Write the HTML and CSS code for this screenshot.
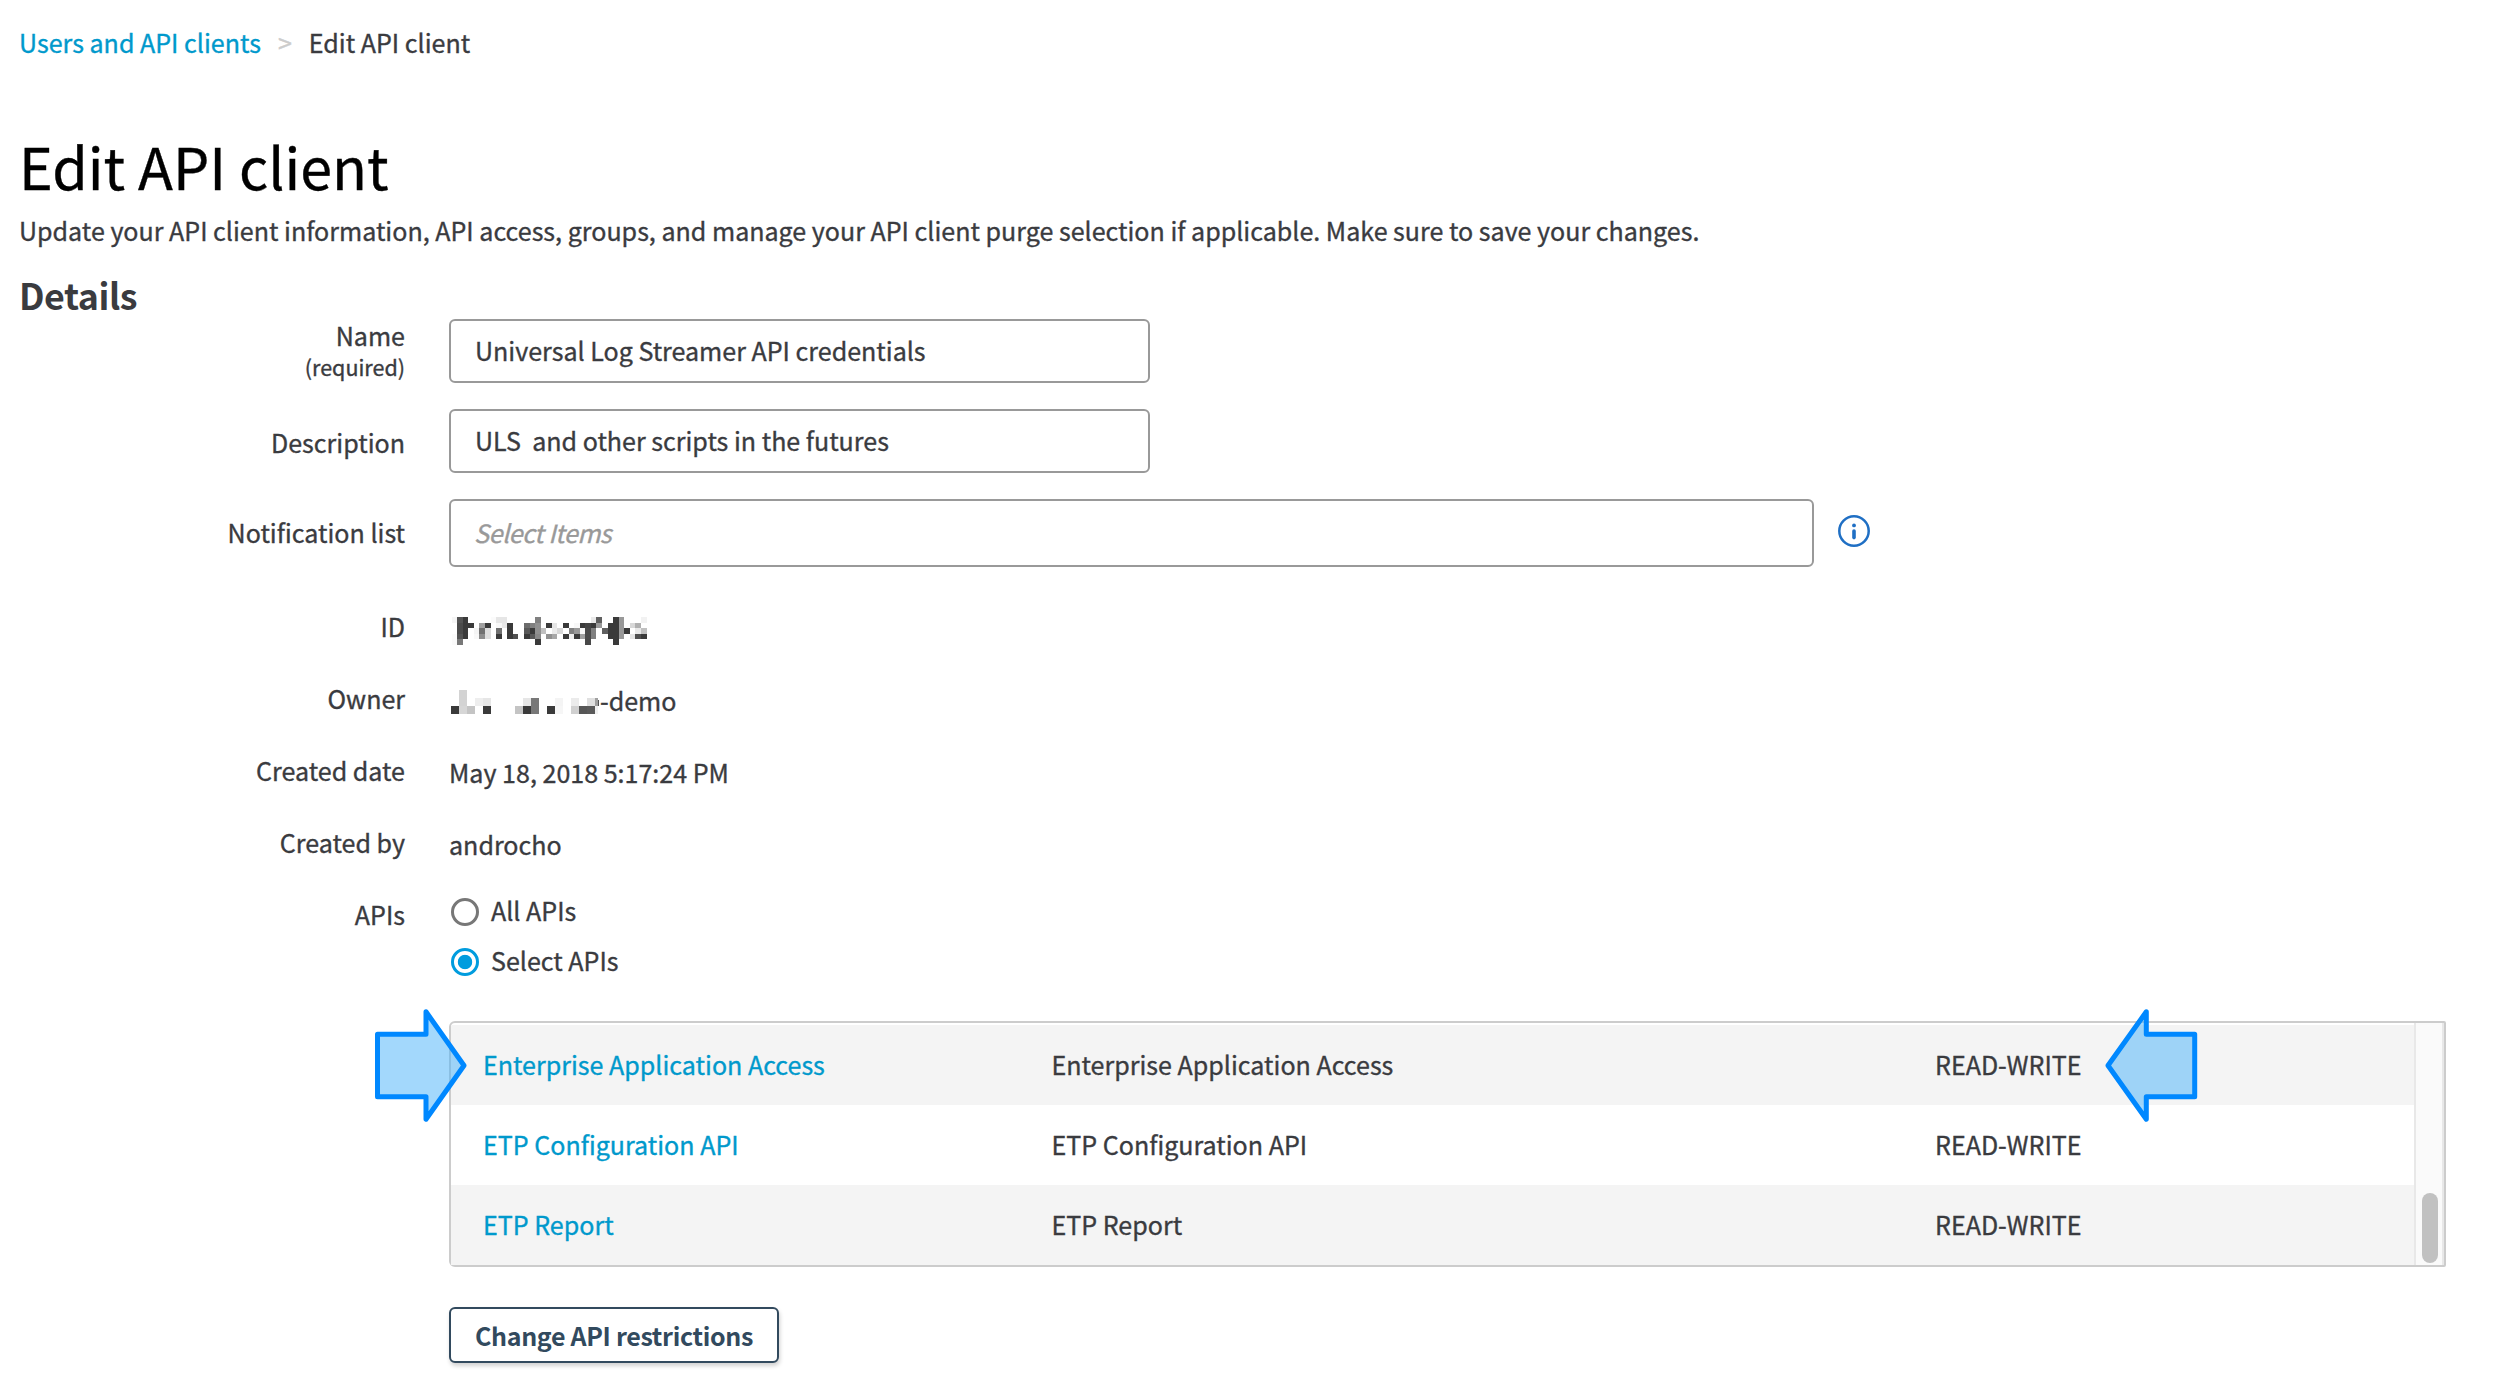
FILE: index.html
```html
<!DOCTYPE html>
<html lang="en">
<head>
<meta charset="utf-8">
<title>Edit API client</title>
<link rel="stylesheet" href="styles.css">
</head>
<body>
<nav class="breadcrumb">
  <a class="link" href="#">Users and API clients</a>
  <span class="breadcrumb-sep">&gt;</span>
  <span>Edit API client</span>
</nav>
<header class="page-header">
  <h1 class="title">Edit API client</h1>
  <p class="intro">Update your API client information, API access, groups, and manage your API client purge selection if applicable. Make sure to save your changes.</p>
  <h2 class="section-title">Details</h2>
</header>
<main class="form">
  <div class="field">
    <div class="label label-name">Name<small class="required">(required)</small></div>
    <div class="input">Universal Log Streamer API credentials</div>
  </div>
  <div class="field">
    <div class="label label-input">Description</div>
    <div class="input">ULS&nbsp; and other scripts in the futures</div>
  </div>
  <div class="field">
    <div class="label label-input">Notification list</div>
    <div class="input input-list">Select Items</div>
    <svg class="info" width="34" height="34" viewBox="0 0 34 34">
      <circle cx="17" cy="17" r="14.7" fill="none" stroke="#1f6fc4" stroke-width="2.5"/>
      <circle cx="17" cy="11.4" r="1.9" fill="#1f6fc4"/>
      <path d="M17 17V23.6" stroke="#1f6fc4" stroke-width="3.6" stroke-linecap="round"/>
    </svg>
  </div>
  <div class="facts">
    <div class="fact">
      <div class="label">ID</div>
      <div class="value"><svg id="id-mask" class="mask" width="200" height="54" shape-rendering="crispEdges"></svg></div>
    </div>
    <div class="fact">
      <div class="label">Owner</div>
      <div class="value"><svg id="owner-mask" class="mask" width="151" height="54" shape-rendering="crispEdges"></svg>-demo</div>
    </div>
    <div class="fact">
      <div class="label">Created date</div>
      <div class="value">May 18, 2018 5:17:24 PM</div>
    </div>
    <div class="fact">
      <div class="label">Created by</div>
      <div class="value">androcho</div>
    </div>
  </div>
  <div class="apis">
    <div class="label label-apis">APIs</div>
    <div class="options">
      <div class="option"><span class="radio"></span><span class="option-text">All APIs</span></div>
      <div class="option"><span class="radio radio-on"></span><span class="option-text">Select APIs</span></div>
    </div>
  </div>
  <section class="table">
    <div class="rows">
      <div class="row row-alt"><a class="link" href="#">Enterprise Application Access</a><span>Enterprise Application Access</span><span>READ-WRITE</span></div>
      <div class="row"><a class="link" href="#">ETP Configuration API</a><span>ETP Configuration API</span><span>READ-WRITE</span></div>
      <div class="row row-alt"><a class="link" href="#">ETP Report</a><span>ETP Report</span><span>READ-WRITE</span></div>
    </div>
    <div class="track"><div class="thumb"></div></div>
    <svg class="arrow arrow-left" width="100" height="120" viewBox="370 1006 100 120">
      <path d="M377.5 1034.3H426V1011.8L464 1065.5L426 1119.2V1096.7H377.5Z"/>
    </svg>
    <svg class="arrow arrow-right" width="100" height="120" viewBox="2101 1006 100 120">
      <path d="M2194.7 1034.3H2146.3V1011.8L2108 1065.5L2146.3 1119.2V1096.7H2194.7Z"/>
    </svg>
  </section>
  <button class="button">Change API restrictions</button>
</main>
<script src="mask.js"></script>
</body>
</html>
```
FILE: mask.js
```
// Redacted values: each row lists two hex digits of grey per cell, ".." for an empty cell.
function drawMask(id, x0, y0, w, h, rows) {
  var svg = document.getElementById(id);
  rows.forEach(function (row, r) {
    row.trim().split(/\s+/).forEach(function (g, c) {
      if (g === '..') return;
      var x = Math.round(x0 + c * w), x2 = Math.round(x0 + (c + 1) * w);
      var y = Math.round(y0 + r * h), y2 = Math.round(y0 + (r + 1) * h);
      var e = document.createElementNS('http://www.w3.org/2000/svg', 'rect');
      e.setAttribute('x', x);
      e.setAttribute('y', y);
      e.setAttribute('width', x2 - x);
      e.setAttribute('height', y2 - y);
      e.setAttribute('fill', '#' + g + g + g);
      svg.appendChild(e);
    });
  });
}
drawMask('id-mask', 2.6, 16, 5.571, 5.6, [
  'f5 54 3a .. .. .. .. fb e6 e6 .. .. .. .. .. 80 .. .. .. .. .. .. .. .. .. ea 60 .. .. 3a 99 .. .. .. f2',
  '.. 4b 3a 3a .. a0 3a .. f8 e8 3a .. .. 6c 80 90 .. 3a e5 .. 3a .. f8 3a 44 3a 99 .. 3a 3a 99 .. d8 b0 ..',
  '.. 4b 3a .. f4 70 dd .. 70 .. 3a .. .. 58 3a 90 c0 .. eb d8 .. 80 99 f8 4a 80 .. 60 3a 3a 99 3a .. e8 c0',
  'fb 54 3a .. f8 8c dd .. 3a .. 3a 50 .. 3a 58 88 .. 90 a8 .. 3a f0 3a a0 4a 80 .. .. 3a 3a 99 .. e5 50 3a',
  'fa 78 .. .. .. .. .. .. .. .. .. .. .. .. .. 3a .. .. .. .. .. .. .. .. 48 .. .. .. .. 3a .. .. .. .. ..'
]);
drawMask('owner-mask', 2, 17, 8, 8, [
  '.. d3',
  '.. d3 .. ee e6 .. .. .. .. e6 78 .. .. f4 .. eb .. e0',
  '3a d6 c4 .. 3a .. .. .. c4 3a 78 .. 3a f6 .. d0 56 5a'
]);
drawMask('owner-mask', 146, 25, 3, 8, ['a0', 'f0']);
drawMask('owner-mask', 149, 27, 1, 6, ['55']);
```
FILE: styles.css
```css
* { box-sizing: border-box; }
body {
  margin: 0;
  padding: 22px 0 0 19px;
  min-height: 1380px;
  background: #fff;
  color: #3a3b3f;
  font: 25.06px/40px "Noto Sans CJK SC", "Noto Sans", sans-serif;
  -webkit-text-stroke: 0.35px;
  white-space: nowrap;
  overflow: hidden;
}
h1, h2, p { margin: 0; font-weight: 400; }
.link { color: #0099cc; text-decoration: none; }
.breadcrumb { display: flex; gap: 17px; height: 40px; }
.breadcrumb-sep { color: #ccc; }
.page-header { padding-top: 63px; }
.title { font-size: 57.4px; line-height: 80px; color: #000; }
.intro { margin-top: 5px; }
.section-title { margin-top: 20px; font-size: 35.8px; line-height: 48px; font-weight: 700; letter-spacing: -0.45px; -webkit-text-stroke: 0; }
.form { padding-top: 1px; }
.field { display: flex; gap: 44px; margin-bottom: 26px; }
.label { width: 386px; flex: none; text-align: right; line-height: 50px; }
.label-name { padding-top: 1px; line-height: 30px; }
.required { display: block; font-size: 21.5px; line-height: 33px; height: 32px; }
.label-input { padding-top: 18px; line-height: 30px; }
.input {
  width: 701px;
  height: 64px;
  padding-left: 24px;
  border: 2px solid #999;
  border-radius: 6px;
  line-height: 58px;
}
.input-list { width: 1365px; height: 68px; padding-left: 23px; line-height: 62px; font-style: italic; letter-spacing: -0.45px; color: #999; }
.info { margin: 15px 0 0 -21px; }
.facts { margin-top: 34px; }
.fact { display: flex; gap: 44px; height: 72px; }
.value { display: flex; line-height: 54px; }
.apis { display: flex; gap: 44px; height: 98px; }
.label-apis { line-height: 50px; }
.options { margin-top: -2px; }
.option { display: flex; gap: 12px; height: 50px; }
.radio { width: 28px; height: 28px; margin: 11px 0 0 2px; border: 3px solid #777; border-radius: 50%; }
.radio-on { border-color: #009cde; background: radial-gradient(circle, #009cde 6.8px, #fff 7.6px); }
.option-text { line-height: 46px; }
.table {
  position: relative;
  display: flex;
  width: 1997px;
  height: 246px;
  margin: 34px 0 40px 430px;
  border: 2px solid #ccc;
  border-radius: 6px 2px 2px 6px;
}
.rows { flex: 1; padding-top: 2px; }
.row { display: grid; grid-template-columns: 568.5px 883.5px 1fr; height: 80px; padding-left: 32px; line-height: 78px; }
.row-alt { background: #f4f4f4; }
.track { width: 30px; padding: 170px 4px 0 6px; background: #fafafa; border: solid #e8e8e8; border-width: 0 2px; }
.thumb { width: 16px; height: 70px; border-radius: 8px; background: #c1c1c1; }
.arrow { position: absolute; top: -17px; }
.arrow path { fill: rgba(71, 177, 249, 0.5); stroke: #0088ff; stroke-width: 5px; stroke-linejoin: round; }
.arrow-left { left: -81px; }
.arrow-right { left: 1650px; }
.button {
  display: block;
  width: 330px;
  height: 56px;
  margin-left: 430px;
  padding: 0;
  border: 2px solid #324a5e;
  border-radius: 6px;
  background: #fff;
  box-shadow: 1px 3px 4px rgba(0, 0, 0, 0.18);
  color: #324a5e;
  font: 700 25px/52px "Noto Sans CJK SC", "Noto Sans", sans-serif;
  letter-spacing: -0.32px;
  -webkit-text-stroke: 0;
}
```
